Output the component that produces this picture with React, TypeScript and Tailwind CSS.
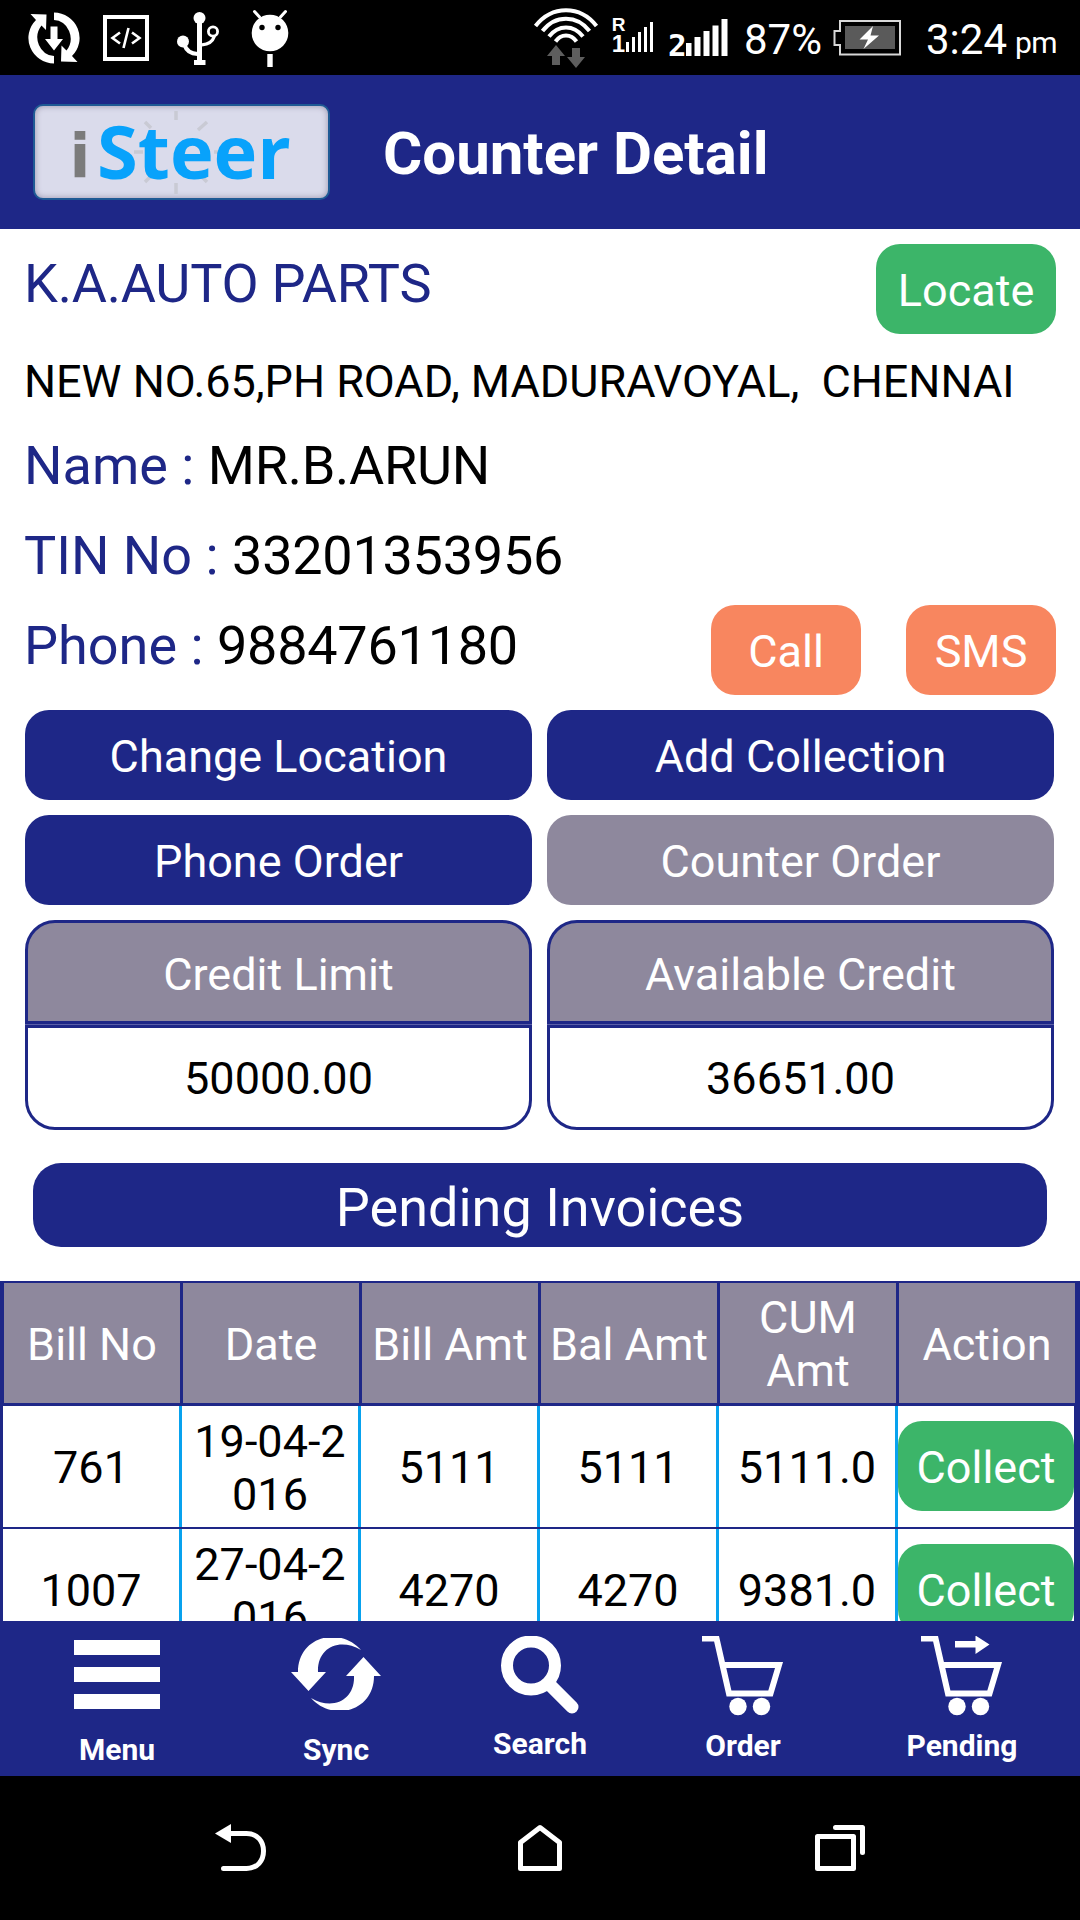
import clsx from 'clsx';

const invoices = [
    { billNo: '761', date: '19-04-2016', billAmt: '5111', balAmt: '5111', cumAmt: '5111.0' },
    { billNo: '1007', date: '27-04-2016', billAmt: '4270', balAmt: '4270', cumAmt: '9381.0' },
];

const columns = ['Bill No', 'Date', 'Bill Amt', 'Bal Amt', 'CUM Amt', 'Action'];

function StatusBar() {
    return (
        <div className="flex h-[75px] shrink-0 items-start bg-black text-white">
            {/* sync */}
            <svg className="ml-[27px] mt-[11px] shrink-0" width="54" height="54" viewBox="27 11 54 54" fill="currentColor">
                <path d="M54 12.5a26 25.5 0 0 1 18 43.5l5.5 6-16.500-.5.5-16 5 5a17 18.500 0 0 0-12.500-30.500z" />
                <path d="M54 63.500a26 25.500 0 0 1-18-43.500l-5.500-6 16 .5-.5 15.500-4.500-4.500a17 18.500 0 0 0 12.500 30.500z" />
                <path d="M50.500 26.500h7V39H63l-9 11.500L45 39h5.500z" />
            </svg>
            <div className="ml-[22px] mt-[15px] flex h-[46px] w-[46px] shrink-0 items-center justify-center border-4 border-white">
                <svg width="32" height="22" viewBox="0 0 32 22" fill="none" stroke="currentColor" strokeWidth="2.600">
                    <path d="M10 5.500 2.500 11l7.500 5.500M22 5.500l7.500 5.500-7.500 5.500M18.500 1l-5 20" />
                </svg>
            </div>
            {/* usb */}
            <svg className="ml-[27px] mt-[11px] shrink-0" width="44" height="56" viewBox="176 11 44 56" fill="none" stroke="currentColor" strokeWidth="4">
                <circle cx="199.500" cy="18" r="6" fill="currentColor" stroke="none" />
                <circle cx="183" cy="41.500" r="6" fill="currentColor" stroke="none" />
                <path d="M199.500 18v44" strokeWidth="5" />
                <path d="M194 62.500h11.500" strokeWidth="5" />
                <path d="M184.500 45c2 6 7 8.800 13 9" />
                <circle cx="213" cy="31.500" r="4.600" strokeWidth="2.800" />
                <path d="M214.500 36c-2 6-7 8.500-12.500 8.800" strokeWidth="3.200" />
            </svg>
            {/* debugging */}
            <svg className="ml-[31px] mt-[9px] shrink-0" width="38" height="60" viewBox="251 9 38 60">
                <path d="M254.500 11.500l5 5.500M285.500 11.500l-5 5.500" stroke="white" strokeWidth="3" strokeLinecap="round" />
                <ellipse cx="270" cy="33" rx="18.300" ry="18.300" fill="white" />
                <circle cx="262" cy="27.500" r="2.700" fill="black" />
                <circle cx="278" cy="27.500" r="2.700" fill="black" />
                <path d="M267.300 54h5.400v13h-5.400z" fill="white" />
            </svg>
            {/* wifi */}
            <svg className="ml-[244px] mt-[6px] shrink-0" width="66" height="64" viewBox="533 6 66 64" fill="none">
                <g stroke="white" strokeWidth="4">
                    <path d="M535.500 26C552 5 580 5 596.500 26" />
                    <path d="M542.500 31C555 14.500 577 14.500 589.500 31" />
                    <path d="M549 36.500C558.500 24.500 573.500 24.500 583 36.500" />
                    <path d="M555.500 41.500C561 33.500 571 33.500 576.500 41.500" />
                </g>
                <path d="M556 45l9 11h-5v9h-8v-9h-5zM576 68l9-11h-5v-9h-8v9h-5z" fill="#5e5e5e" />
            </svg>
            {/* sim 1 */}
            <div className="ml-[13px] mt-[15px] flex w-[13px] shrink-0 flex-col items-center font-['Liberation_Sans'] font-bold">
                <span className="text-[19px] leading-[20px]">R</span>
                <span className="text-[24px] leading-[17px]">1</span>
            </div>
            <svg className="ml-px mt-[21px] shrink-0" width="28" height="31" viewBox="0 0 28 31" fill="currentColor">
                <path d="M0 21h3v10H0zM6 16h3v15H6zM12 11h3v20h-3zM18 6h3v25h-3zM24 1h3v30h-3z" />
            </svg>
            {/* sim 2 */}
            <div className="ml-[14px] mt-[31px] w-[16px] shrink-0 text-center font-['DejaVu_Sans_Mono'] text-[31px] font-bold leading-[28px]">2</div>
            <svg className="ml-[2px] mt-[19px] shrink-0" width="42" height="37" viewBox="0 0 42 37" fill="currentColor">
                <path d="M0 24h5.500v13H0zM8.500 18h6v19h-6zM17.500 12h6v25h-6zM26.500 6.500h6V37h-6zM35.500 0h6v37h-6z" />
            </svg>
            <span className="ml-[16px] mt-[15px] w-[80px] shrink-0 whitespace-nowrap text-[42px] leading-[49px]">87%</span>
            {/* battery */}
            <svg className="ml-[9px] mt-[19px] shrink-0" width="70" height="37" viewBox="833 19 70 37" fill="none">
                <path d="M840 21h60v33.500h-60V45h-5.500V31h5.500z" stroke="#d8d8d8" strokeWidth="2" />
                <path d="M845 26h50v23h-50z" fill="#5a5a5a" />
                <path d="M873 26l-13.500 13.500h8.500l-4.500 9.500L879 35.500h-8.500z" fill="white" />
            </svg>
            <span className="ml-[23px] mt-[15px] shrink-0 whitespace-nowrap text-[42px] leading-[49px]">3:24</span>
            <span className="ml-[8px] mt-[25px] shrink-0 text-[30px] leading-[36px] tracking-[-0.5px]">pm</span>
        </div>
    );
}

function Logo() {
    return (
        <div className="relative flex h-[96px] w-[297px] items-start rounded-[10px] border-2 border-[#1f5a94] bg-[#dadbeb] shadow-[inset_0_0_6px_#9a93ac]">
            <svg className="absolute inset-0" width="293" height="92" viewBox="35 107 293 92" stroke="#c9cad4" strokeWidth="3.500">
                <path d="M176 112v9M176 184v11M207 123l-9 8M145 123l6 6M145 183l6-6M207 183l-6-6M134 153h9M214 153h6" />
            </svg>
            <span className="relative ml-[34px] mt-[13px] w-[22px] text-center font-['DejaVu_Sans'] text-[61px] font-bold leading-[74px] text-[#7b7b7b]">i</span>
            <span className="relative ml-[6px] font-['Open_Sans'] text-[74px] font-bold leading-[90px] text-[#08a2fb]">Steer</span>
        </div>
    );
}

function Button({ label, className }: { label: string; className?: string }) {
    return (
        <button className={clsx('flex h-[90px] items-center justify-center rounded-[24px] pt-[2px] text-[45px] leading-[53px] text-white', className)}>
            {label}
        </button>
    );
}

function Field({ label, value }: { label: string; value: string }) {
    return (
        <div className="h-[90px] whitespace-pre text-[54px] leading-[64px]">
            <span className="text-[#1e2787]">{label} : </span>
            <span className="tracking-[-0.250px] text-black">{value}</span>
        </div>
    );
}

function CreditBox({ title, amount }: { title: string; amount: string }) {
    return (
        <div className="text-center text-[45px] leading-[53px]">
            <div className="flex h-[104px] items-center justify-center rounded-t-[30px] border-[3px] border-[#1e2787] bg-[#8e889d] pt-[4px] text-white">{title}</div>
            <div className="h-px bg-[#5a5fa8]" />
            <div className="flex h-[105px] items-center justify-center rounded-b-[30px] border-[3px] border-[#1e2787] pt-[2px] text-black">{amount}</div>
        </div>
    );
}

function Cart({ arrow }: { arrow?: boolean }) {
    return (
        <svg width="82" height="80" viewBox="0 0 82 80" fill="none">
            <path d="M0 2.500h14.500L27 57.500h41.500L77 29H22" stroke="white" strokeWidth="6" />
            <circle cx="36" cy="70.500" r="8.700" fill="white" />
            <circle cx="59.500" cy="70.500" r="8.700" fill="white" />
            {arrow && <path d="M34 5h20.500V-.5L68.500 8.500l-14 9.500v-6.500H34z" fill="white" />}
        </svg>
    );
}

function BottomBar() {
    return (
        <div className="flex h-[155px] shrink-0 items-start bg-[#1e2787] text-[30px] font-bold leading-[36px] text-white">
            <div className="ml-[57px] flex w-[120px] flex-col items-center pt-[19px]">
                <svg width="86" height="69" viewBox="0 0 86 69" fill="currentColor">
                    <path d="M0 0h86v15H0zM0 27h86v15H0zM0 54h86v15H0z" />
                </svg>
                <span className="mt-[23px]">Menu</span>
            </div>
            <div className="ml-[99px] flex w-[120px] flex-col items-center pt-[17px]">
                <svg width="90" height="72" viewBox="0 0 90 72" fill="currentColor">
                    <path d="M0 34h7C7-2 49-12 70 12 48-1 26 10 27 34h8L17.500 53z" />
                    <path d="M90 38h-7c0 36-42 46-63 22 22 13 44 2 43-22h-8l17.500-19z" />
                </svg>
                <span className="mt-[22px]">Sync</span>
            </div>
            <div className="ml-[84px] flex w-[120px] flex-col items-center pt-[15px]">
                <svg width="80" height="79" viewBox="0 0 80 79" fill="none" stroke="currentColor">
                    <circle cx="31" cy="29.500" r="24" strokeWidth="12" />
                    <path d="M49 48l23 23" strokeWidth="13" strokeLinecap="round" />
                </svg>
                <span className="mt-[11px]">Search</span>
            </div>
            <div className="ml-[83px] flex w-[120px] flex-col items-center pt-[15px]">
                <Cart />
                <span className="mt-[12px]">Order</span>
            </div>
            <div className="ml-[99px] flex w-[120px] flex-col items-center pt-[15px]">
                <Cart arrow />
                <span className="mt-[12px]">Pending</span>
            </div>
        </div>
    );
}

function NavBar() {
    return (
        <div className="flex h-[144px] shrink-0 items-start bg-black pt-[46px]">
            <svg className="ml-[214px]" width="54" height="52" viewBox="214 1822 54 52" fill="none">
                <path d="M230 1833.500h16.500c11 0 17 8 17 17.500s-6 17.500-17 17.500H223.500" stroke="white" strokeWidth="5" strokeLinecap="round" />
                <path d="M215 1833.500l16-9.500v19z" fill="white" />
            </svg>
            <svg className="ml-[248px]" width="48" height="52" viewBox="516 1822 48 52" fill="none">
                <path d="M520.500 1842.500l19.500-15 19.500 15v26h-39z" stroke="white" strokeWidth="5" strokeLinejoin="round" />
            </svg>
            <svg className="ml-[250px]" width="54" height="52" viewBox="814 1822 54 52" fill="none" stroke="white" strokeWidth="5" strokeLinecap="round" strokeLinejoin="round">
                <path d="M817.500 1836.500h36v32h-36zM835.500 1827.500h27v25" />
            </svg>
        </div>
    );
}

export default function App() {
    return (
        <div className="flex h-[1920px] w-[1080px] flex-col overflow-hidden bg-white font-[Roboto,sans-serif]">
            <StatusBar />
            <div className="flex h-[154px] shrink-0 items-start bg-[#1e2787]">
                <div className="ml-[33px] mt-[29px]"><Logo /></div>
                <h1 className="ml-[53px] mt-[44px] text-[60px] font-bold leading-[70px] text-white">Counter Detail</h1>
            </div>

            <div className="h-[1392px] shrink-0 overflow-hidden">
                <div className="flex justify-between pl-[24px] pr-[24px]">
                    <div className="mt-[23px] text-[54px] leading-[64px] tracking-[-0.200px] text-[#1e2787]">K.A.AUTO PARTS</div>
                    <Button label="Locate" className="mt-[15px] w-[180px] bg-[#3cb569]" />
                </div>
                <div className="mt-[21px] whitespace-pre pl-[24px] text-[45px] leading-[53px] tracking-[-0.030px] text-black">NEW NO.65,PH ROAD, MADURAVOYAL,  CHENNAI</div>
                <div className="mt-[26px] flex h-[272px] items-start justify-between pl-[24px] pr-[24px]">
                    <div>
                        <Field label="Name" value="MR.B.ARUN" />
                        <Field label="TIN No" value="33201353956" />
                        <Field label="Phone" value="9884761180" />
                    </div>
                    <div className="mt-[171px] flex gap-[45px]">
                        <Button label="Call" className="w-[150px] bg-[#f8865f]" />
                        <Button label="SMS" className="w-[150px] bg-[#f8865f]" />
                    </div>
                </div>

                <div className="mt-[4px] grid grid-cols-2 gap-x-[15px] gap-y-[15px] pl-[25px] pr-[26px]">
                    <Button label="Change Location" className="bg-[#1e2787]" />
                    <Button label="Add Collection" className="bg-[#1e2787]" />
                    <Button label="Phone Order" className="bg-[#1e2787]" />
                    <Button label="Counter Order" className="bg-[#8e889d]" />
                    <CreditBox title="Credit Limit" amount="50000.00" />
                    <CreditBox title="Available Credit" amount="36651.00" />
                </div>

                <div className="mx-[33px] mt-[33px] flex h-[84px] items-center justify-center rounded-[28px] bg-[#1e2787] pt-[5px] text-[54px] leading-[64px] text-white">
                    Pending Invoices
                </div>

                <div className="mt-[34px] bg-[#1e2787] pt-[2px] text-center text-[45px] leading-[53px]">
                    <div className="mb-[3px] grid w-[1075px] grid-cols-6 gap-[3px] pl-[4px]">
                        {columns.map((column) => (
                            <div key={column} className="flex h-[120px] items-center justify-center bg-[#8e889d] px-[6px] pt-[2px] text-white">{column}</div>
                        ))}
                    </div>
                    {invoices.map((invoice) => (
                        <div key={invoice.billNo} className="mb-[2px] ml-[3px] grid h-[121px] w-[1071px] grid-cols-6 gap-[3px] bg-[#08a2ee] text-black">
                            <div className="flex items-center justify-center bg-white pt-[2px]">{invoice.billNo}</div>
                            <div className="flex items-center justify-center break-all bg-white px-[12px] pt-[2px]">{invoice.date}</div>
                            <div className="flex items-center justify-center bg-white pt-[2px]">{invoice.billAmt}</div>
                            <div className="flex items-center justify-center bg-white pt-[2px]">{invoice.balAmt}</div>
                            <div className="flex items-center justify-center bg-white pt-[2px]">{invoice.cumAmt}</div>
                            <div className="flex items-start justify-center bg-white pt-[15px]">
                                <Button label="Collect" className="w-full bg-[#3cb569]" />
                            </div>
                        </div>
                    ))}
                </div>
            </div>

            <BottomBar />
            <NavBar />
        </div>
    );
}
